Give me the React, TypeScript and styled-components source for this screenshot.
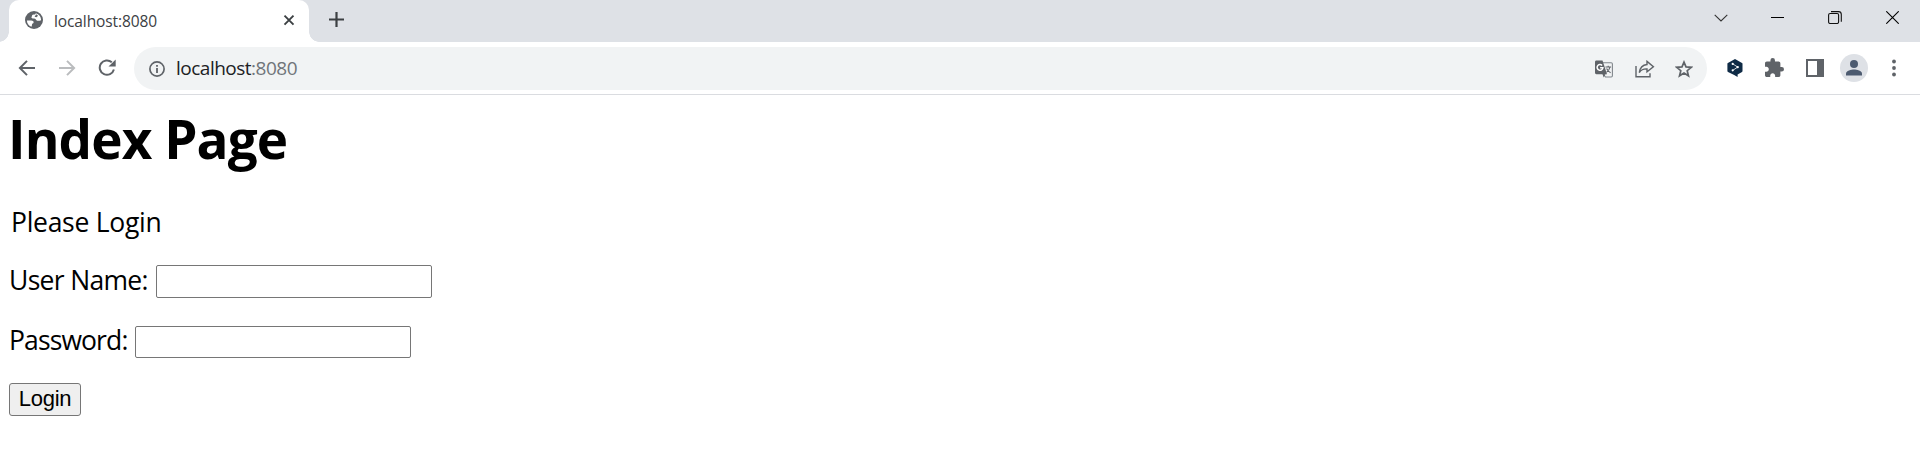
import React from "react";
import styled, { createGlobalStyle } from "styled-components";

const GlobalStyle = createGlobalStyle`
  * { box-sizing: border-box; }
  html, body { margin: 0; background: #fff; }
  body { font-family: "Open Sans", "Noto Sans", sans-serif; color: #000; overflow: hidden; }
  svg { display: block; }
`;

const Window = styled.div`
  width: 1920px;
  height: 457px;
  display: flex;
  flex-direction: column;
`;

const TabStrip = styled.header`
  height: 42px;
  flex: none;
  display: flex;
  justify-content: space-between;
  background: #dee1e6;
`;

const TabGroup = styled.div`
  display: flex;
  align-items: flex-end;
`;

const TabFoot = styled.span<{ $side: "left" | "right" }>`
  width: 10px;
  height: 10px;
  margin-left: ${(p) => (p.$side === "left" ? "-1px" : "0")};
  background: radial-gradient(
    circle at ${(p) => (p.$side === "left" ? "0 0" : "100% 0")},
    transparent 9.5px,
    #fff 10px
  );
`;

const Tab = styled.div`
  width: 300px;
  height: 42px;
  display: flex;
  align-items: flex-start;
  padding: 11px 11px 0 16px;
  background: #fff;
  border-radius: 10px 10px 0 0;
`;

const TabTitle = styled.span`
  flex: 1;
  margin: -1px 0 0 11px;
  font-size: 15.5px;
  line-height: 22px;
  letter-spacing: -0.1px;
  color: #3c4043;
`;

const NewTab = styled.span`
  align-self: flex-start;
  margin: 12px 0 0 10px;
`;

const WindowControls = styled.div`
  display: flex;
  height: 35px;
`;

const WindowControl = styled.span<{ $shift?: number }>`
  width: 57px;
  display: flex;
  align-items: center;
  justify-content: center;
  padding-left: ${(p) => p.$shift ?? 0}px;
`;

const Toolbar = styled.nav`
  height: 53px;
  flex: none;
  display: flex;
  align-items: center;
  padding: 0 6px 0 7px;
  border-bottom: 1px solid #dadce0;
`;

const IconCell = styled.span<{ $lift?: number; $shift?: number }>`
  width: 40px;
  height: 40px;
  flex: none;
  display: flex;
  align-items: center;
  justify-content: center;
  padding-bottom: ${(p) => p.$lift ?? 0}px;
  padding-left: ${(p) => Math.max(p.$shift ?? 0, 0)}px;
  padding-right: ${(p) => Math.max(-(p.$shift ?? 0), 0)}px;
`;

const AddressBar = styled.div`
  flex: 1;
  height: 43px;
  display: flex;
  align-items: center;
  margin: 1px 7px 0;
  padding: 0 3px;
  border-radius: 22px;
  background: #f1f3f4;
`;

const Address = styled.span`
  flex: 1;
  margin: -2px 0 0 -1px;
  font-size: 19px;
  line-height: 28px;
  letter-spacing: -0.5px;
  color: #202124;
`;

const Port = styled.span`
  color: #70757a;
`;

const Avatar = styled.span`
  width: 28px;
  height: 28px;
  border-radius: 50%;
  background: #dee1e6;
  display: flex;
  align-items: center;
  justify-content: center;
`;

const Page = styled.main`
  padding: 14px 9px 0;
`;

const Heading = styled.h1`
  margin: 0 0 0 -1px;
  font-size: 53px;
  line-height: 60px;
  font-weight: 700;
  letter-spacing: -0.9px;
`;

const Message = styled.p`
  margin: 35px 0 0 2px;
  font-size: 26.5px;
  line-height: 36px;
  letter-spacing: -0.28px;
`;

const Field = styled.label<{ $top: number }>`
  display: flex;
  align-items: flex-start;
  margin-top: ${(p) => p.$top}px;
  font-size: 26.5px;
  line-height: 36px;
  height: 36px;
`;

const FieldName = styled.span<{ $width: number; $spacing: number }>`
  width: ${(p) => p.$width}px;
  white-space: nowrap;
  letter-spacing: ${(p) => p.$spacing}px;
`;

const Input = styled.input<{ $height: number; $drop: number }>`
  width: 276px;
  height: ${(p) => p.$height}px;
  margin: ${(p) => p.$drop}px 0 0;
  padding: 1px 2px;
  border: 1px solid #767676;
  border-radius: 2px;
  background: #fff;
  outline: none;
`;

const LoginButton = styled.button`
  display: block;
  width: 72px;
  height: 33px;
  margin: 25px 0 0;
  padding: 0 0 1px;
  border: 1px solid #767676;
  border-radius: 3px;
  background: #efefef;
  color: #000;
  font-family: "Liberation Sans", Arial, sans-serif;
  font-size: 22px;
  line-height: 28px;
  letter-spacing: -0.3px;
`;

const GREY = "#5f6368";

const Globe = () => (
  <svg width="18" height="18" viewBox="0 0 18 18">
    <circle cx="9" cy="9" r="9" fill={GREY} />
    <path d="M10.800 2.200C10.600 3.400 9.300 3.500 7.800 3.700 6.800 4 7.200 5.200 6.500 6c-.5.8.5 1.500 2.500 1.500 1.900.1 2 1.800 3.200 2.200 1.300.3 2.600-.2 3.900-.5C16.200 5.800 14 3 10.800 2.200z" fill="#fff" />
    <path d="M1.900 9.400c2 .1 4.600-.2 6.100.6 1.200.8.6 2.200-.4 2.600-1 .5-.2 1.900-1.200 3.100C3.600 14.800 1.900 12.200 1.900 9.400z" fill="#fff" />
    <path d="M11.200 3.300l1.900 1.400-1.600 1.600-1.900-.5z" fill={GREY} />
  </svg>
);

const Back = ({ color }: { color: string }) => (
  <svg width="18" height="16" viewBox="0 0 18 16" fill="none" stroke={color} strokeWidth="2">
    <path d="M17 8H2M9 .9L1.900 8 9 15.100" />
  </svg>
);

const Forward = ({ color }: { color: string }) => (
  <svg width="18" height="16" viewBox="0 0 18 16" fill="none" stroke={color} strokeWidth="2">
    <path d="M1 8h15M9 .9L16.100 8 9 15.100" />
  </svg>
);

const Reload = () => (
  <svg width="18" height="17" viewBox="0 0 18 17">
    <path d="M15.900 10.500A7.200 7.200 0 1 1 13.800 3.300" fill="none" stroke={GREY} strokeWidth="2" />
    <path d="M17.700.4v7.200h-7.200z" fill={GREY} />
  </svg>
);

const Info = () => (
  <svg width="16" height="16" viewBox="0 0 16 16">
    <circle cx="8" cy="8" r="7.100" fill="none" stroke={GREY} strokeWidth="1.700" />
    <path d="M7.100 7h1.800v5H7.100zM7.100 4h1.800v1.800H7.100z" fill={GREY} />
  </svg>
);

const Translate = () => (
  <svg width="18" height="18" viewBox="0 0 18 18">
    <path d="M8 2.800h8.200c.7 0 1.200.5 1.200 1.200v11.800c0 .7-.5 1.200-1.200 1.200H10.500L7.500 13" fill="#f1f3f4" stroke="#80868b" strokeWidth="1.100" />
    <path d="M1.400.4h6.100L12 14.200H1.400c-.8 0-1.400-.6-1.400-1.400v-11C0 1 .6.400 1.400.4z" fill={GREY} />
    <path d="M10.500 14.200L8.700 17.500 7.500 14z" fill={GREY} />
    <path d="M7.100 5.400A2.900 2.900 0 1 0 7.900 7.700H5.100" fill="none" stroke="#fff" strokeWidth="1.500" />
    <path d="M10.500 7h5.600M13.200 5.700V7M15 7c-.5 2.300-2 4.300-3.600 5.400M11.600 8.500c.8 1.700 2.300 3.300 4 4.200" fill="none" stroke={GREY} strokeWidth="1.100" />
  </svg>
);

const Share = () => (
  <svg width="20" height="18" viewBox="0 0 20 18" fill="none" stroke={GREY} strokeWidth="1.400">
    <path d="M1 6v10.700h14v-3.500" />
    <path d="M12 1.400L18.400 6.700 12 11.800V8.900C8.300 8.700 6 10 4.300 12.500 4.900 8.200 7.300 5 12 4.500z" strokeLinejoin="miter" />
  </svg>
);

const Star = () => (
  <svg width="18" height="18" viewBox="0 0 18 18">
    <path d="M9 2.100l2 4.800 5.200.4-4 3.400 1.300 5.100L9 13l-4.500 2.800 1.300-5.100-4-3.400L7 6.900z" fill="none" stroke={GREY} strokeWidth="1.700" />
  </svg>
);

const DeepL = () => (
  <svg width="16" height="18" viewBox="0 0 16 18">
    <path d="M8 0l7 3.900c.3.2.5.5.5.9v7.300c0 .4-.2.700-.5.900L10.600 15.500V18L7.200 16 1 13c-.4-.2-.6-.5-.6-.9V4.800c0-.4.200-.7.500-.9z" fill="#0f2b46" />
    <path d="M5.700 4.800l5 3.300-5 3.300" fill="none" stroke="#fff" strokeWidth=".8" />
    <g fill="#fff">
      <circle cx="5.700" cy="4.900" r="1.100" />
      <circle cx="10.700" cy="8.100" r="1.200" />
      <circle cx="5.700" cy="11.300" r="1.100" />
    </g>
  </svg>
);

const Puzzle = () => (
  <svg width="19" height="19" viewBox="2 1 21 21">
    <path fill={GREY} d="M20.500 11H19V7c0-1.100-.9-2-2-2h-4V3.500a2.500 2.500 0 0 0-5 0V5H4c-1.100 0-1.990.9-1.990 2v3.800H3.500c1.490 0 2.700 1.210 2.700 2.700s-1.210 2.700-2.700 2.700H2V20c0 1.100.9 2 2 2h3.800v-1.500c0-1.490 1.210-2.700 2.700-2.700s2.700 1.210 2.700 2.700V22H17c1.100 0 2-.9 2-2v-4h1.500a2.500 2.500 0 0 0 0-5z" />
  </svg>
);

const SidePanel = () => (
  <svg width="18" height="18" viewBox="0 0 18 18">
    <path fill={GREY} fillRule="evenodd" d="M0 0h18v18H0zM2 2v14h9V2z" />
  </svg>
);

const Person = () => (
  <svg width="16" height="16" viewBox="0 0 16 16" fill="#4d5b70">
    <circle cx="8" cy="4" r="4" />
    <path d="M0 15.500v-2c0-2.700 5.300-4 8-4s8 1.300 8 4v2z" />
  </svg>
);

const Dots = () => (
  <svg width="4" height="18" viewBox="0 0 4 18" fill={GREY}>
    <circle cx="2" cy="2.500" r="1.900" />
    <circle cx="2" cy="9" r="1.900" />
    <circle cx="2" cy="15.500" r="1.900" />
  </svg>
);

export default function App() {
  return (
    <Window>
      <GlobalStyle />
      <TabStrip>
        <TabGroup>
          <TabFoot $side="left" />
          <Tab>
            <Globe />
            <TabTitle>localhost:8080</TabTitle>
            <svg width="18" height="18" viewBox="0 0 18 18" stroke="#3c4043" strokeWidth="1.900">
              <path d="M4.500 4.700l9 9M13.500 4.700l-9 9" />
            </svg>
          </Tab>
          <TabFoot $side="right" />
          <NewTab>
            <svg width="15" height="15" viewBox="0 0 15 15" stroke="#3c4043" strokeWidth="2.200">
              <path d="M7.500 0v15M0 7.500h15" />
            </svg>
          </NewTab>
        </TabGroup>
        <WindowControls>
          <WindowControl>
            <svg width="14" height="8" viewBox="0 0 14 8" fill="none" stroke="#333" strokeWidth="1.100">
              <path d="M.7.900L7 7 13.300.9" />
            </svg>
          </WindowControl>
          <WindowControl>
            <svg width="13" height="1" viewBox="0 0 13 1">
              <path d="M0 0h13v1H0z" />
            </svg>
          </WindowControl>
          <WindowControl>
            <svg width="14" height="13" viewBox="0 0 14 13" fill="none" stroke="#111" strokeWidth="1.100">
              <rect x=".6" y="2.500" width="10" height="10" rx="1.500" />
              <path d="M3 .6h7.500a2.800 2.800 0 0 1 2.800 2.800v7.300" />
            </svg>
          </WindowControl>
          <WindowControl $shift={2}>
            <svg width="13" height="13" viewBox="0 0 13 13" stroke="#000" strokeWidth="1.100">
              <path d="M.3.300l12.400 12.400M12.700.3L.3 12.700" />
            </svg>
          </WindowControl>
        </WindowControls>
      </TabStrip>

      <Toolbar>
        <IconCell $lift={1} $shift={-1}><Back color={GREY} /></IconCell>
        <IconCell $lift={1} $shift={-1}><Forward color="#babcbe" /></IconCell>
        <IconCell $lift={1} $shift={-1}><Reload /></IconCell>
        <AddressBar>
          <IconCell><Info /></IconCell>
          <Address>
            localhost<Port>:8080</Port>
          </Address>
          <IconCell><Translate /></IconCell>
          <IconCell $shift={1}><Share /></IconCell>
          <IconCell><Star /></IconCell>
        </AddressBar>
        <IconCell $lift={1} $shift={1}><DeepL /></IconCell>
        <IconCell $lift={2} $shift={1}><Puzzle /></IconCell>
        <IconCell $lift={1} $shift={1}><SidePanel /></IconCell>
        <IconCell>
          <Avatar><Person /></Avatar>
        </IconCell>
        <IconCell><Dots /></IconCell>
      </Toolbar>

      <Page>
        <Heading>Index Page</Heading>
        <Message>Please Login</Message>
        <Field $top={22}>
          <FieldName $width={147} $spacing={-0.68}>User Name:</FieldName>
          <Input $height={33} $drop={3} type="text" />
        </Field>
        <Field $top={24}>
          <FieldName $width={126} $spacing={-0.88}>Password:</FieldName>
          <Input $height={32} $drop={4} type="password" />
        </Field>
        <LoginButton type="button">Login</LoginButton>
      </Page>
    </Window>
  );
}
